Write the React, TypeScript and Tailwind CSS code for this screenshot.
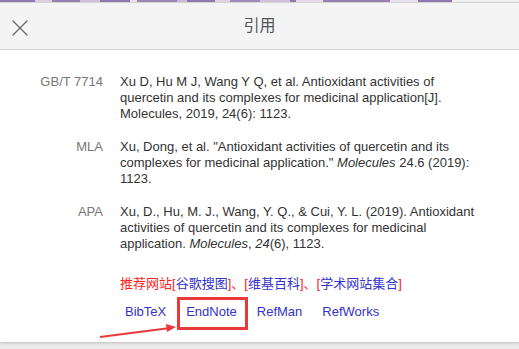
import { X } from "lucide-react";

const strip: [number, string][] = [
  [35, "bg-[#8f78ad]"],
  [17, "bg-[#d9d0e3]"],
  [28, "bg-[#9580b0]"],
  [20, "bg-[#cfc3dc]"],
  [30, "bg-[#8f78ad]"],
  [7, "bg-[#e6e0ec]"],
  [40, "bg-[#9a86b4]"],
  [10, "bg-[#c7b9d6]"],
  [28, "bg-[#8f78ad]"],
  [15, "bg-[#ddd4e6]"],
  [30, "bg-[#a08cb8]"],
  [30, "bg-[#cfc3dc]"],
  [6, "bg-[#8f78ad]"],
  [27, "bg-[#e4dcec]"],
  [67, "bg-[#9580b0]"],
  [28, "bg-[#e8e2ee]"],
  [34, "bg-[#8f78ad]"],
];

const citations = [
  {
    label: "GB/T 7714",
    body: (
      <>Xu D, Hu M J, Wang Y Q, et al. Antioxidant activities of quercetin and its complexes for medicinal application[J]. Molecules, 2019, 24(6): 1123.</>
    ),
  },
  {
    label: "MLA",
    body: (
      <>
        Xu, Dong, et al. "Antioxidant activities of quercetin and its complexes for medicinal application." <i>Molecules</i> 24.6 (2019): 1123.
      </>
    ),
  },
  {
    label: "APA",
    body: (
      <>
        Xu, D., Hu, M. J., Wang, Y. Q., &amp; Cui, Y. L. (2019). Antioxidant activities of quercetin and its complexes for medicinal application. <i>Molecules</i>, <i>24</i>(6), 1123.
      </>
    ),
  },
];

export default function App() {
  return (
    <div className="relative h-[349px] w-[519px] overflow-hidden bg-[#ebebeb] font-['Liberation_Sans','Noto_Sans_CJK_SC',sans-serif]">
      {/* bits of the page behind the dialog */}
      <div className="flex h-[2px] bg-[#f4f4f4]">
        {strip.map(([w, c], i) => (
          <div key={i} className={c} style={{ width: w }} />
        ))}
      </div>

      <div className="h-[340px] bg-white shadow-[0_1px_3px_rgba(0,0,0,0.2)]">
        <div className="relative flex h-[48px] items-center justify-center border-y border-[#d4d4d4] bg-[#f4f4f4]">
          <X className="absolute left-[6px] top-[11px] h-[28px] w-[28px] text-[#666]" strokeWidth={1} />
          <h2 className="text-[16px] text-[#555]">引用</h2>
        </div>

        <div className="pl-[15px] pt-[24px] text-[13px] leading-[16px]">
          <div className="space-y-[17px]">
            {citations.map((c) => (
              <div key={c.label} className="flex gap-[17px]">
                <div className="w-[88px] shrink-0 text-right text-[#777]">{c.label}</div>
                <div className="w-[360px] text-[#333]">{c.body}</div>
              </div>
            ))}
          </div>

          <div className="ml-[105px] mt-[24px] text-[#ff1a1a]">
            推荐网站[<span className="text-[#3333cc]">谷歌搜图</span>]、[
            <span className="text-[#3333cc]">维基百科</span>]、[
            <span className="text-[#3333cc]">学术网站集合</span>]
          </div>

          <div className="ml-[110px] mt-[12px] flex gap-[20px] text-[#3333cc]">
            <span>BibTeX</span>
            <span>EndNote</span>
            <span>RefMan</span>
            <span>RefWorks</span>
          </div>
        </div>
      </div>

      {/* red annotation */}
      <div className="absolute left-[177px] top-[297px] h-[33px] w-[71px] border-[3px] border-[#e83a3a]" />
      <svg className="absolute left-0 top-0" width="519" height="349">
        <line x1="100" y1="337" x2="170" y2="328" stroke="#e83a3a" strokeWidth="2" />
        <polygon points="176,327 166,324 167,332" fill="#e83a3a" />
      </svg>
    </div>
  );
}
